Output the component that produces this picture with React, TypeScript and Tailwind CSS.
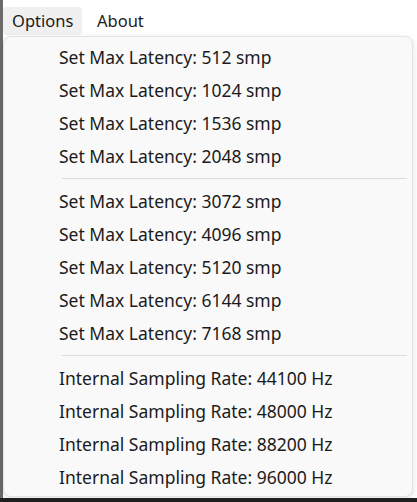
import React from "react";

const groups: string[][] = [
  [
    "Set Max Latency: 512 smp",
    "Set Max Latency: 1024 smp",
    "Set Max Latency: 1536 smp",
    "Set Max Latency: 2048 smp",
  ],
  [
    "Set Max Latency: 3072 smp",
    "Set Max Latency: 4096 smp",
    "Set Max Latency: 5120 smp",
    "Set Max Latency: 6144 smp",
    "Set Max Latency: 7168 smp",
  ],
  [
    "Internal Sampling Rate: 44100 Hz",
    "Internal Sampling Rate: 48000 Hz",
    "Internal Sampling Rate: 88200 Hz",
    "Internal Sampling Rate: 96000 Hz",
  ],
];

export default function App() {
  return (
    <div
      className="w-[417px] h-[502px] bg-[#1f1f1f] flex flex-col overflow-hidden text-[#1b1b1b]"
      style={{ fontFamily: '"Segoe UI", "Noto Sans", "Open Sans", sans-serif' }}
    >
      <div className="flex-1 flex">
        <div className="w-[3px] bg-[#6b6b6b]" />
        <div className="flex-1 bg-white flex flex-col">
          <div className="h-[36px] flex items-start pt-[7px] text-[16.5px]">
            <div className="h-[28px] w-[79px] bg-[#f0f0f0] rounded-[4px] flex items-center pl-[9px]">
              Options
            </div>
            <div className="h-[28px] flex items-center pl-[15px]">About</div>
          </div>
          <div className="flex-1 pr-[4px] pb-[1px]">
            <div className="h-full bg-[#f9f9f9] border border-[#e3e3e3] rounded-[8px] shadow-[0_2px_6px_rgba(0,0,0,0.12)] pt-[3px] text-[17.5px]">
              {groups.map((g, gi) => (
                <div key={gi}>
                  {gi > 0 && (
                    <div className="h-[12px] flex items-center pl-[58px] pr-[5px]">
                      <div className="h-px w-full bg-[#dcdcdc]" />
                    </div>
                  )}
                  {g.map((t) => (
                    <div key={t} className="h-[33px] flex items-center pl-[55px] pt-[1px]">
                      {t}
                    </div>
                  ))}
                </div>
              ))}
            </div>
          </div>
        </div>
      </div>
      <div className="h-[4px] bg-[#1f1f1f]" />
    </div>
  );
}
